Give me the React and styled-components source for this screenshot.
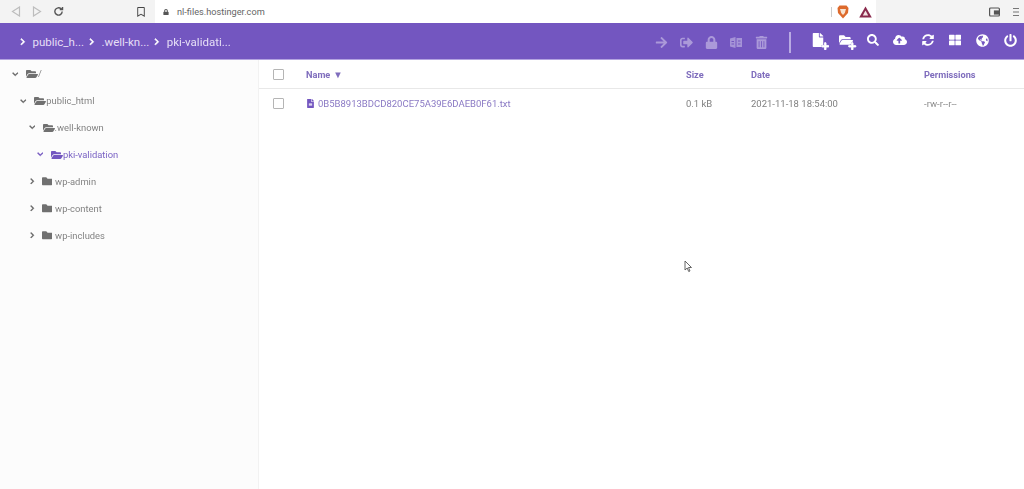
import styled, { createGlobalStyle } from "styled-components";
import {
  FaArrowRight,
  FaChevronDown,
  FaChevronRight,
  FaCloudUploadAlt,
  FaFile,
  FaFileAlt,
  FaFolder,
  FaFolderOpen,
  FaGlobeAmericas,
  FaLock,
  FaPlus,
  FaPowerOff,
  FaRegBookmark,
  FaSearch,
  FaSignOutAlt,
  FaSyncAlt,
  FaThLarge,
  FaTrashAlt,
} from "react-icons/fa";

const GlobalStyle = createGlobalStyle`
  html, body {
    margin: 0;
    padding: 0;
    background: #ffffff;
  }
  body {
    font-family: Roboto, "Liberation Sans", sans-serif;
  }
`;

const Page = styled.div`
  position: relative;
  width: 1024px;
  height: 489px;
  overflow: hidden;
  display: flex;
  flex-direction: column;
  filter: blur(0.5px);
`;

// Browser chrome
const BrowserBar = styled.div`
  height: 23px;
  flex: none;
  display: flex;
  align-items: center;
  background: #f3f3f3;
  padding-left: 11px;
  box-sizing: border-box;
`;

const NavIcons = styled.div`
  display: flex;
  align-items: center;
  gap: 11px;
  width: 125px;
  flex: none;
`;

const BookmarkBtn = styled.div`
  width: 19px;
  flex: none;
  color: #444;
  font-size: 10px;
  display: flex;
`;

const UrlBox = styled.div`
  width: 721px;
  height: 23px;
  flex: none;
  background: #ffffff;
  display: flex;
  align-items: center;
  padding: 0 4px 0 8px;
  box-sizing: border-box;
  font-size: 9.2px;
  color: #666;
`;

const UrlText = styled.span`
  flex: 1;
  margin-left: 8px;
`;

const UrlDivider = styled.span`
  width: 1px;
  height: 10px;
  background: #ccc;
  margin-right: 5px;
`;

const UrlActions = styled.div`
  display: flex;
  align-items: center;
  gap: 10px;
`;

const BrowserExtras = styled.div`
  margin-left: auto;
  display: flex;
  align-items: center;
  gap: 12px;
  padding-right: 4px;
`;

// Purple header
const Toolbar = styled.header`
  height: 37px;
  flex: none;
  display: flex;
  align-items: center;
  background: #7356c0;
  border-bottom: 1px solid #b3a3e0;
  box-sizing: border-box;
  padding: 0 7px 0 19px;
`;

const Crumbs = styled.nav`
  display: flex;
  align-items: center;
  flex: 1;
  color: #e6dff6;
  font-size: 11.5px;
  padding-top: 2px;
`;

const Crumb = styled.span`
  display: flex;
  align-items: center;
  gap: 6px;
  margin-right: 4px;
  svg {
    font-size: 7.5px;
    color: #fff;
    stroke: #fff;
    stroke-width: 40px;
  }
`;

const ToolGroup = styled.div`
  display: flex;
  align-items: center;
  gap: ${(p) => p.$gap}px;
  padding: ${(p) => (p.$raised ? "0 0 2px" : "2px 0 0")};
`;

const Tool = styled.span`
  width: 14px;
  height: 14px;
  display: flex;
  align-items: center;
  justify-content: center;
  color: #fff;
  opacity: ${(p) => (p.$off ? 0.4 : 1)};
  font-size: ${(p) => p.$size || 13}px;
  position: relative;
`;

const PlusBadge = styled(FaPlus)`
  position: absolute;
  right: -4px;
  bottom: -3px;
  font-size: 8.5px;
  stroke: #fff;
  stroke-width: 50px;
  filter: drop-shadow(0 0 0.7px #7356c0);
`;

const Divider = styled.span`
  width: 2px;
  height: 21px;
  background: #b9aae3;
  margin: 2px 20px 0 21px;
`;

// Body
const Body = styled.div`
  flex: 1;
  display: flex;
  min-height: 0;
`;

const Sidebar = styled.aside`
  width: 259px;
  flex: none;
  background: #fcfcfc;
  border-right: 1px solid #f2f2f2;
  box-sizing: border-box;
  padding-top: 0.5px;
`;

const TreeRow = styled.div`
  height: 26.9px;
  display: flex;
  align-items: center;
  padding-left: ${(p) => 12 + p.$level * 8.3}px;
  font-size: 9.4px;
  color: ${(p) => (p.$active ? "#7a62c4" : "#828282")};
`;

const Caret = styled.span`
  width: 9px;
  margin-right: ${(p) => (p.$open ? 5 : 4)}px;
  display: flex;
  font-size: 6.5px;
  color: ${(p) => (p.$active ? "#7356c0" : "#666")};
  svg {
    stroke: currentColor;
    stroke-width: 30px;
  }
`;

const TreeFolder = styled.span`
  display: flex;
  font-size: ${(p) => (p.$open ? 12 : 10.5)}px;
  margin-right: ${(p) => (p.$open ? 0 : 3)}px;
  color: ${(p) => (p.$active ? "#7356c0" : "#707070")};
`;

const Main = styled.main`
  flex: 1;
  background: #fff;
`;

const Row = styled.div`
  display: grid;
  grid-template-columns: 47px 380px 65px 173px 1fr;
  align-items: center;
  height: 29px;
  box-sizing: border-box;
  border-bottom: ${(p) => (p.$head ? "1px solid #e8e8e8" : "none")};
  font-size: 9.5px;
  color: #808080;
`;

const CheckCell = styled.div`
  padding-left: 14px;
  display: flex;
`;

const CheckBox = styled.span`
  width: 9px;
  height: 9px;
  border: 1px solid #b5b5b5;
  border-radius: 1px;
  display: block;
`;

const HeadCell = styled.div`
  color: #7f6dbd;
  font-weight: 700;
  font-size: 9.2px;
  display: flex;
  align-items: center;
  gap: 3px;
`;

const SortMark = styled.span`
  font-size: 9.5px;
`;

const FileCell = styled.div`
  display: flex;
  align-items: center;
  gap: 3px;
  color: #8a79c4;
  svg {
    color: #7356c0;
    font-size: 9px;
  }
`;

const PermCell = styled.div`
  color: #8c8c8c;
`;

const Pointer = styled.svg`
  position: absolute;
  left: 684px;
  top: 260px;
`;

const tree = [
  { name: "/", level: 0, open: true },
  { name: "public_html", level: 1, open: true },
  { name: ".well-known", level: 2, open: true },
  { name: "pki-validation", level: 3, open: true, active: true },
  { name: "wp-admin", level: 2 },
  { name: "wp-content", level: 2 },
  { name: "wp-includes", level: 2 },
];

function BackIcon({ flip }) {
  return (
    <svg width="10" height="11" viewBox="0 0 10 11" style={flip ? { transform: "scaleX(-1)" } : undefined}>
      <path d="M8.5 1 L1.5 5.5 L8.5 10 Z" fill="none" stroke="#bdbdbd" strokeWidth="1.2" />
    </svg>
  );
}

function ReloadIcon() {
  return (
    <svg width="11" height="11" viewBox="0 0 12 12" fill="none" stroke="#555" strokeWidth="1.5">
      <path d="M10 6a4 4 0 1 1-1.2-2.9" />
      <path d="M10.4 1v3h-3" fill="#555" />
    </svg>
  );
}

function BraveIcon() {
  return (
    <svg width="12" height="14" viewBox="0 0 12 14">
      <path d="M2.5 .5h7L11.5 3 11 8 6 13.5 1 8 .5 3z" fill="#dd6a2c" />
      <path d="M3 4h6L7.8 8 6 10 4.2 8z" fill="#f7e3d0" />
    </svg>
  );
}

function RewardsIcon() {
  return (
    <svg width="13" height="12" viewBox="0 0 13 12">
      <path d="M6.500 .5 12.800 11.500H.2z" fill="#8a2a4d" />
      <path d="M6.500 4.500 9.200 9.500H3.800z" fill="#f3e4e4" />
    </svg>
  );
}

function WalletIcon() {
  return (
    <svg width="11" height="10" viewBox="0 0 11 10" fill="none" stroke="#555" strokeWidth="1.2">
      <rect x=".6" y="1" width="9.800" height="8" rx="1" />
      <rect x="5.500" y="4" width="4.500" height="3" fill="#555" />
    </svg>
  );
}

function MenuIcon() {
  return (
    <svg width="8" height="10" viewBox="0 0 8 10" stroke="#777" strokeWidth="1.2">
      <path d="M1 1.500h6M1 5h6M1 8.500h6" />
    </svg>
  );
}

function ExtractIcon() {
  return (
    <svg width="14" height="13" viewBox="0 0 14 13" fill="currentColor">
      <path d="M1 2.500 6.500 1v11L1 10.500zM7.500 2h5.500v9H7.500z" opacity=".9" />
      <path d="M2.500 5h2.500v1H2.500zM2.500 7.500h2.500v1H2.500zM9 4.500h2.500v1H9zM9 7.500h2.500v1H9z" fill="#7356c0" />
    </svg>
  );
}

export default function App() {
  return (
    <>
      <GlobalStyle />
      <Page>
        <BrowserBar>
          <NavIcons>
            <BackIcon />
            <BackIcon flip />
            <ReloadIcon />
          </NavIcons>
          <BookmarkBtn>
            <FaRegBookmark />
          </BookmarkBtn>
          <UrlBox>
            <FaLock size={6} color="#555" />
            <UrlText>nl-files.hostinger.com</UrlText>
            <UrlDivider />
            <UrlActions>
              <BraveIcon />
              <RewardsIcon />
            </UrlActions>
          </UrlBox>
          <BrowserExtras>
            <WalletIcon />
            <MenuIcon />
          </BrowserExtras>
        </BrowserBar>

        <Toolbar>
          <Crumbs>
            <Crumb><FaChevronRight />public_h...</Crumb>
            <Crumb><FaChevronRight />.well-kn...</Crumb>
            <Crumb><FaChevronRight />pki-validati...</Crumb>
          </Crumbs>
          <ToolGroup $gap={11}>
            <Tool $off><FaArrowRight /></Tool>
            <Tool $off><FaSignOutAlt /></Tool>
            <Tool $off><FaLock /></Tool>
            <Tool $off><ExtractIcon /></Tool>
            <Tool $off><FaTrashAlt /></Tool>
          </ToolGroup>
          <Divider />
          <ToolGroup $gap={13.4} $raised>
            <Tool $size={14}><FaFile /><PlusBadge /></Tool>
            <Tool $size={14}><FaFolderOpen /><PlusBadge /></Tool>
            <Tool $size={12}><FaSearch /></Tool>
            <Tool $size={16}><FaCloudUploadAlt /></Tool>
            <Tool $size={12}><FaSyncAlt /></Tool>
            <Tool $size={12}><FaThLarge /></Tool>
            <Tool $size={13}><FaGlobeAmericas /></Tool>
            <Tool $size={13}><FaPowerOff /></Tool>
          </ToolGroup>
        </Toolbar>

        <Body>
          <Sidebar>
            {tree.map((item) => (
              <TreeRow key={item.name} $level={item.level} $active={item.active}>
                <Caret $open={item.open} $active={item.active}>
                  {item.open ? <FaChevronDown /> : <FaChevronRight />}
                </Caret>
                <TreeFolder $open={item.open} $active={item.active}>
                  {item.open ? <FaFolderOpen /> : <FaFolder />}
                </TreeFolder>
                {item.name}
              </TreeRow>
            ))}
          </Sidebar>
          <Main>
            <Row $head>
              <CheckCell><CheckBox /></CheckCell>
              <HeadCell>Name <SortMark>▼</SortMark></HeadCell>
              <HeadCell>Size</HeadCell>
              <HeadCell>Date</HeadCell>
              <HeadCell>Permissions</HeadCell>
            </Row>
            <Row>
              <CheckCell><CheckBox /></CheckCell>
              <FileCell><FaFileAlt />0B5B8913BDCD820CE75A39E6DAEB0F61.txt</FileCell>
              <div>0.1 kB</div>
              <div>2021-11-18 18:54:00</div>
              <PermCell>-rw-r--r--</PermCell>
            </Row>
          </Main>
        </Body>

        <Pointer width="9" height="13" viewBox="0 0 9 13">
          <path d="M1 1v9l2.200-2 1.500 3.500 1.300-.5-1.500-3.500H7.500z" fill="#fff" stroke="#555" strokeWidth=".9" />
        </Pointer>
      </Page>
    </>
  );
}
